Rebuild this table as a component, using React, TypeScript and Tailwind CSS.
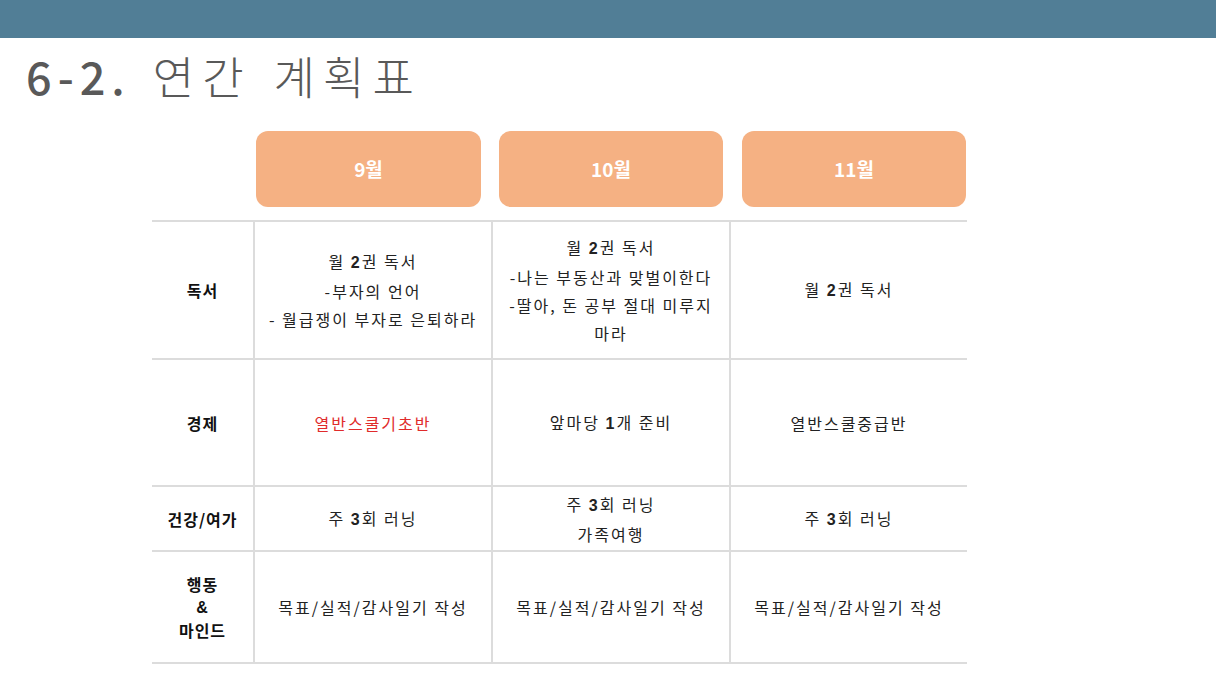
const KR = "font-['Noto_Sans_CJK_KR',sans-serif]"

const MONTHS = ['9월', '10월', '11월']

const PILL_MARGIN = ['ml-[3px] mr-[10px]', 'ml-[8px] mr-[6px]', 'ml-[13px] mr-[1px]']

function B({ children }: { children: React.ReactNode }) {
  return <span className="font-bold font-['Liberation_Sans',sans-serif]">{children}</span>
}

const ROWS: { label: React.ReactNode; height: string; cells: React.ReactNode[] }[] = [
  {
    label: '독서',
    height: 'h-[138px]',
    cells: [
      <>
        월 <B>2</B>권 독서
        <br />
        -부자의 언어
        <br />- 월급쟁이 부자로 은퇴하라
      </>,
      <>
        월 <B>2</B>권 독서
        <br />
        -나는 부동산과 맞벌이한다
        <br />
        -딸아, 돈 공부 절대 미루지
        <br />
        마라
      </>,
      <>
        월 <B>2</B>권 독서
      </>,
    ],
  },
  {
    label: '경제',
    height: 'h-[127px]',
    cells: [
      <span className="text-[#e02b2b]">열반스쿨기초반</span>,
      <>
        앞마당 <B>1</B>개 준비
      </>,
      <>열반스쿨중급반</>,
    ],
  },
  {
    label: '건강/여가',
    height: 'h-[65px]',
    cells: [
      <>
        주 <B>3</B>회 러닝
      </>,
      <>
        주 <B>3</B>회 러닝
        <br />
        가족여행
      </>,
      <>
        주 <B>3</B>회 러닝
      </>,
    ],
  },
  {
    label: (
      <>
        행동
        <br />
        <span className="font-['Liberation_Sans',sans-serif]">&amp;</span>
        <br />
        마인드
      </>
    ),
    height: 'h-[112px]',
    cells: [
      <>목표/실적/감사일기 작성</>,
      <>목표/실적/감사일기 작성</>,
      <>목표/실적/감사일기 작성</>,
    ],
  },
]

export default function App() {
  return (
    <div className={`w-[1216px] h-[684px] bg-white overflow-hidden ${KR}`}>
      {/* top bar */}
      <div className="h-[38px] bg-[#517e96]" />

      {/* title */}
      <div className="h-[93px] pl-[26px] pt-[8px] flex items-start text-[45px] leading-[60px] text-[#595959] whitespace-nowrap">
        <span className="font-medium tracking-[6px]">6-2.</span>
        <span className="ml-[22px] font-light tracking-[8px]">연간</span>
        <span className="ml-[22px] font-light tracking-[8px]">계획표</span>
      </div>

      <div className="ml-[152px] w-[815px]">
        {/* month headers */}
        <div className="grid grid-cols-[101px_238px_238px_238px] h-[89px]">
          <div />
          {MONTHS.map((m, i) => (
            <div
              key={m}
              className={`${PILL_MARGIN[i]} h-[76px] rounded-[12px] bg-[#f5b183] flex items-center justify-center text-white text-[19px] font-bold`}
            >
              {m}
            </div>
          ))}
        </div>

        {/* table */}
        <div className="border-t-2 border-[#dcdcdc]">
          {ROWS.map((row, r) => (
            <div
              key={r}
              className={`grid grid-cols-[101px_238px_238px_238px] ${row.height} border-b-2 border-[#dcdcdc]`}
            >
              <div className="flex items-center justify-center text-center text-[16px] leading-[22px] font-bold tracking-[1px] text-[#111]">
                <div>{row.label}</div>
              </div>
              {row.cells.map((c, i) => (
                <div
                  key={i}
                  className="border-l-2 border-[#dcdcdc] flex items-center justify-center text-center text-[16px] leading-[28px] tracking-[2px] text-[#222]"
                >
                  <div>{c}</div>
                </div>
              ))}
            </div>
          ))}
        </div>
      </div>
    </div>
  )
}
